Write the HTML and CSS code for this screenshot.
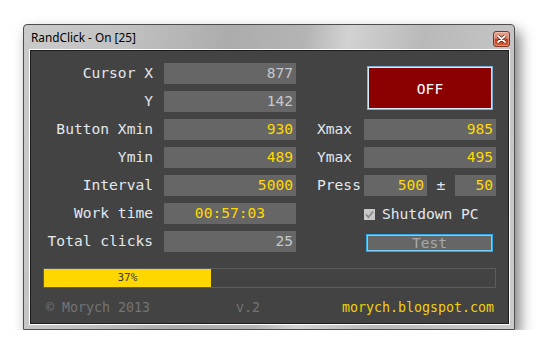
FILE: index.html
```html
<!DOCTYPE html>
<html lang="en">
<head>
  <meta charset="UTF-8" />
  <title>RandClick - On [25]</title>
  <link rel="stylesheet" href="styles.css">
</head>
<body>

  <div class="window">
    <div class="titlebar">
      <span class="title">RandClick - On [25]</span>
      <button class="close-btn">
        <svg width="9" height="8" viewBox="0 0 9 8">
          <path d="M1 1 L8 7 M8 1 L1 7" stroke="#5a2010" stroke-width="3.2" stroke-linecap="round"/>
          <path d="M1 1 L8 7 M8 1 L1 7" stroke="#fff" stroke-width="1.8" stroke-linecap="round"/>
        </svg>
      </button>
    </div>

    <div class="client">
      <div class="panel">
        <div class="form-grid">
          <label class="label">Cursor X</label>
          <div class="field grey">877</div>
          <div class="off-wrap">
            <button class="off-btn">OFF</button>
          </div>

          <label class="label">Y</label>
          <div class="field grey">142</div>

          <label class="label">Button Xmin</label>
          <div class="field">930</div>
          <label class="label2">Xmax</label>
          <div class="field">985</div>

          <label class="label">Ymin</label>
          <div class="field">489</div>
          <label class="label2">Ymax</label>
          <div class="field">495</div>

          <label class="label">Interval</label>
          <div class="field">5000</div>
          <label class="label2">Press</label>
          <div class="press">
            <div class="field press-main">500</div>
            <span class="plusminus">±</span>
            <div class="field press-dev">50</div>
          </div>

          <label class="label">Work time</label>
          <div class="field center">00:57:03</div>
          <div class="check-row">
            <span class="checkbox">
              <svg width="9" height="9" viewBox="0 0 9 9">
                <path d="M1 4.5 L3.5 7.2 L8 1.5" fill="none" stroke="#8a8a8a" stroke-width="1.8"/>
              </svg>
            </span>
            <span>Shutdown PC</span>
          </div>

          <label class="label">Total clicks</label>
          <div class="field grey">25</div>
          <div class="test-wrap">
            <button class="test-btn">Test</button>
          </div>
        </div>

        <div class="progress">
          <div class="progress-fill" style="width: 37%">37%</div>
        </div>

        <div class="footer">
          <span class="copy">© Morych 2013</span>
          <span class="version">v.2</span>
          <span class="site">morych.blogspot.com</span>
        </div>
      </div>
    </div>
  </div>

</body>
</html>
```

FILE: styles.css
```css
/* Base styles */
* {
  margin: 0;
  padding: 0;
  box-sizing: border-box;
}

body {
  background: #fff;
  padding: 24px 0 0 23px;
  font-family: "DejaVu Sans Mono", "Liberation Mono", monospace;
}

/* Window frame */
.window {
  width: 492px;
  height: 306px;
  border: 1px solid #4e4e4e;
  border-radius: 4px 4px 0 0;
  padding: 0 4px 4px 5px;
  background: linear-gradient(100deg, #cacaca 0%, #c2c2c2 18%, #acacac 38%, #b4b4b4 52%, #d2d2d2 60%, #b9b9b9 74%, #cbcbcb 100%);
  box-shadow: 5px 7px 14px rgba(0, 0, 0, 0.5);
}

.titlebar {
  height: 24px;
  display: flex;
  justify-content: space-between;
  align-items: center;
  padding-left: 2px;
}

.title {
  font-family: "Noto Sans", "Open Sans", sans-serif;
  font-size: 11.8px;
  color: #000;
}

.close-btn {
  width: 17px;
  height: 16px;
  margin-top: 4px;
  border: 1px solid #7a3424;
  border-radius: 3px;
  background: linear-gradient(to bottom, #e9a797 0%, #d77a62 45%, #c0401f 55%, #d2603a 100%);
  display: flex;
  align-items: center;
  justify-content: center;
  box-shadow: inset 0 0 0 1px rgba(255, 220, 210, 0.4);
}

.client {
  border: 1px solid #fff;
}

.panel {
  border: 1px solid #1c1c1c;
  background: #434343;
  height: 274px;
  padding: 12px 11px 0 12px;
}

/* Form */
.form-grid {
  display: grid;
  grid-template-columns: 121px 132px 68px 132px;
  grid-template-rows: repeat(7, 21px);
  row-gap: 7px;
  font-size: 14.6px;
  line-height: 19px;
}

.label {
  text-align: right;
  padding-right: 11px;
  color: #e2e8ee;
}

.label2 {
  padding-left: 21px;
  color: #e2e8ee;
}

.field {
  background: #666;
  color: #ffd800;
  text-align: right;
  padding-right: 3px;
  height: 21px;
}

.field.grey {
  color: #c4c8cc;
}

.field.center {
  text-align: center;
  padding-right: 0;
}

.off-wrap {
  grid-column: 3 / 5;
  grid-row: 1 / 3;
  display: flex;
  justify-content: flex-end;
  padding: 3px 3px 0 0;
}

.off-btn {
  width: 126px;
  height: 44px;
  background: #8b0000;
  color: #fff;
  font-family: inherit;
  font-size: 14.6px;
  border: 1px solid #7fb4d8;
  box-shadow: inset 0 0 0 1px #d4ecfa;
}

.press {
  display: flex;
  align-items: flex-start;
}

.press-main {
  width: 63px;
}

.plusminus {
  width: 28px;
  text-align: center;
  color: #e2e8ee;
}

.press-dev {
  width: 41px;
}

.check-row {
  grid-column: 4;
  display: flex;
  align-items: center;
  gap: 7px;
  color: #e2e8ee;
}

.checkbox {
  width: 11px;
  height: 11px;
  margin-top: 1px;
  background: #c9c9c9;
  display: flex;
  align-items: center;
  justify-content: center;
}

.test-wrap {
  grid-column: 4;
  padding: 2px 3px 0 2px;
}

.test-btn {
  width: 127px;
  height: 18px;
  background: #666;
  color: #a9a9a9;
  font-family: inherit;
  font-size: 14.6px;
  line-height: 14px;
  border: 1px solid #2ea8e6;
  box-shadow: inset 0 0 0 1px #7fd0f6;
}

/* Progress */
.progress {
  margin-top: 16px;
  height: 20px;
  border: 1px solid #5c5c5c;
  width: 453px;
}

.progress-fill {
  height: 18px;
  background: #ffd700;
  color: #3a3a3a;
  font-size: 11px;
  line-height: 18px;
  text-align: center;
}

/* Footer */
.footer {
  display: flex;
  padding: 9px 0 0 3px;
  font-size: 13.3px;
  line-height: 22px;
  color: #747474;
}

.version {
  margin-left: 86px;
}

.site {
  margin-left: auto;
  margin-right: 3px;
  color: #f2d200;
}
```
